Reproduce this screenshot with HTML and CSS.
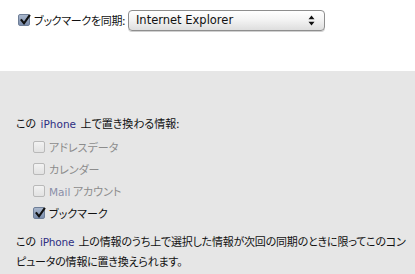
FILE: index.html
```html
<!DOCTYPE html>
<html lang="ja">
<head>
<meta charset="utf-8">
<link rel="stylesheet" href="styles.css">
</head>
<body>
<div class="top">
  <div class="sync-row">
    <span class="cb checked"><svg viewBox="0 0 12 12" width="12" height="12"><path d="M2.5 6.2 L5 9.3 L10.3 1.8" fill="none" stroke="#111" stroke-width="2.1" stroke-linecap="square"/></svg></span>
    <span class="label">ブックマークを同期:</span>
    <div class="select">
      <span class="select-text">Internet Explorer</span>
      <svg class="arrows" viewBox="0 0 7 11" width="7" height="11"><path d="M3.5 0.5 L6.5 4.2 L0.5 4.2 Z M3.5 10.5 L6.5 6.8 L0.5 6.8 Z" fill="#111"/></svg>
    </div>
  </div>
</div>
<div class="bottom">
  <div class="heading">この <span class="latin blue">iPhone</span> 上で置き換わる情報:</div>
  <div class="options">
    <div class="opt disabled"><span class="cb"></span><span>アドレスデータ</span></div>
    <div class="opt disabled"><span class="cb"></span><span>カレンダー</span></div>
    <div class="opt disabled"><span class="cb"></span><span><span class="latin mail">Mail</span> アカウント</span></div>
    <div class="opt"><span class="cb checked"><svg viewBox="0 0 12 12" width="12" height="12"><path d="M2.5 6.2 L5 9.3 L10.3 1.8" fill="none" stroke="#111" stroke-width="2.1" stroke-linecap="square"/></svg></span><span>ブックマーク</span></div>
  </div>
  <p class="note">この <span class="latin blue">iPhone</span> 上の情報のうち上で選択した情報が次回の同期のときに限ってこのコン<br>ピュータの情報に置き換えられます。</p>
</div>
</body>
</html>
```
FILE: styles.css
```css
html, body {
  margin: 0;
  padding: 0;
  width: 415px;
  height: 274px;
  overflow: hidden;
  background: #ffffff;
  font-family: "Noto Sans CJK JP", "Liberation Sans", sans-serif;
  font-size: 11px;
  font-feature-settings: "palt";
  color: #111;
}
.top {
  height: 71px;
  box-sizing: border-box;
  padding: 9px 0 0 18px;
  background: #fff;
}
.sync-row {
  display: flex;
  align-items: center;
  height: 22px;
}
.cb {
  display: inline-block;
  width: 12px;
  height: 12px;
  box-sizing: border-box;
  border: 1px solid #b5b5b5;
  border-radius: 2px;
  background: linear-gradient(#f4f4f4, #e0e0e0);
  flex: none;
  position: relative;
}
.cb.checked {
  border-color: #6f7f98;
  background: linear-gradient(#a9b7cc, #7c8ead);
}
.cb svg {
  position: absolute;
  left: 0;
  top: -1px;
  overflow: visible;
}
.label {
  margin-left: 4px;
  letter-spacing: -0.3px;
}
.select {
  margin-left: 3px;
  width: 197px;
  height: 21px;
  box-sizing: border-box;
  border: 1px solid #8e8e8e;
  border-radius: 4px;
  background: linear-gradient(#ffffff 0%, #f4f4f4 45%, #dedede 100%);
  box-shadow: 0 1px 0 #d0d0d0;
  display: flex;
  align-items: center;
  justify-content: space-between;
  padding: 0 9px 0 7px;
}
.select-text {
  font-family: "DejaVu Sans", "Liberation Sans", sans-serif;
  font-size: 11.5px;
  color: #111;
}
.arrows {
  flex: none;
}
.bottom {
  height: 203px;
  box-sizing: border-box;
  background: #e6e6e6;
  padding: 43px 0 0 16px;
}
.heading {
  line-height: 18px;
  height: 18px;
}
.latin {
  font-family: "DejaVu Sans", "Liberation Sans", sans-serif;
  font-size: 10.5px;
}
.blue {
  color: #2e2e82;
  margin: 0 2px;
}
.options {
  margin-top: 4px;
  padding-left: 17px;
  display: flex;
  flex-direction: column;
}
.opt {
  height: 22px;
  display: flex;
  align-items: center;
  gap: 4px;
}
.opt.disabled {
  color: #8c8c8c;
}
.opt.disabled .cb {
  border-color: #b9b9b9;
  background: linear-gradient(#f2f2f2, #e2e2e2);
}
.mail {
  color: #8a8fa8;
}
.note {
  margin: 8px 0 0 0;
  line-height: 19px;
  white-space: nowrap;
  letter-spacing: -0.2px;
}
```
